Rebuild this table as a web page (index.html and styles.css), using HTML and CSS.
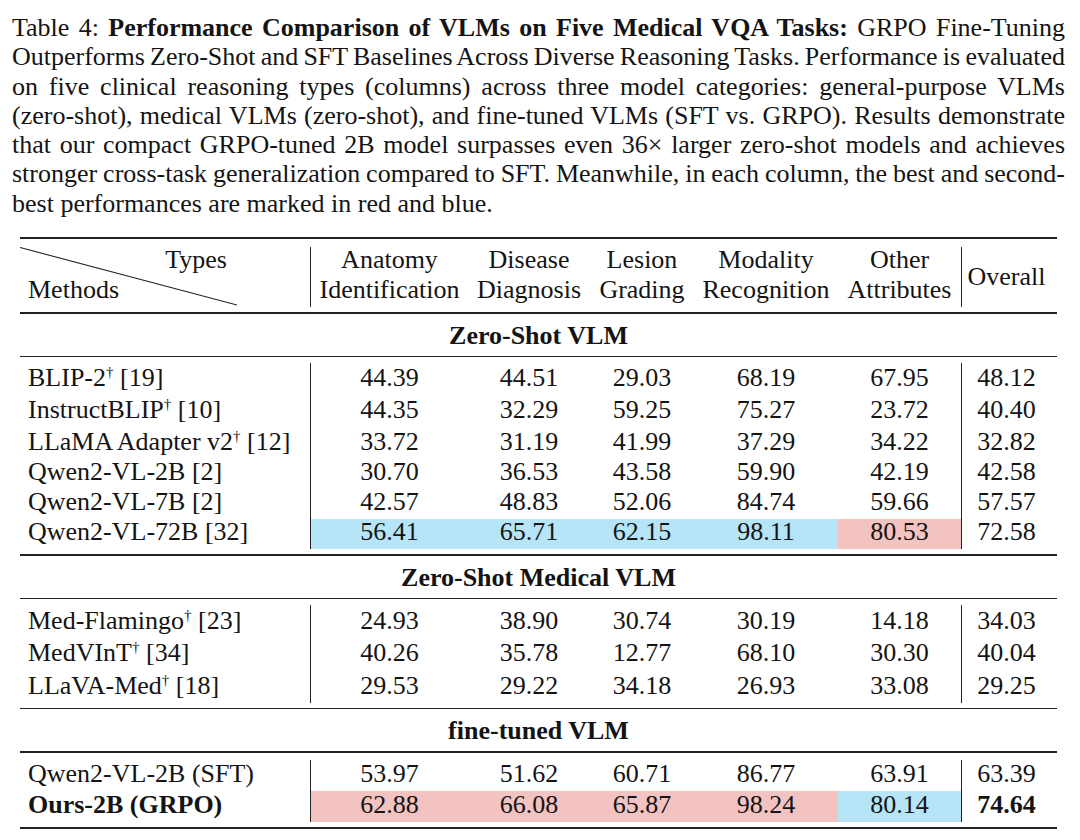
FILE: index.html
```html
<!DOCTYPE html>
<html lang="en">
<head>
<meta charset="utf-8">
<title>Table 4</title>
<link rel="stylesheet" href="styles.css">
</head>
<body>
<div class="page">
  <div class="caption">
    <span class="ln">Table 4: <b>Performance Comparison of VLMs on Five Medical VQA Tasks:</b> GRPO Fine-Tuning</span>
    <span class="ln">Outperforms Zero-Shot and SFT Baselines Across Diverse Reasoning Tasks. Performance is evaluated</span>
    <span class="ln">on five clinical reasoning types (columns) across three model categories: general-purpose VLMs</span>
    <span class="ln">(zero-shot), medical VLMs (zero-shot), and fine-tuned VLMs (SFT vs. GRPO). Results demonstrate</span>
    <span class="ln">that our compact GRPO-tuned 2B model surpasses even 36× larger zero-shot models and achieves</span>
    <span class="ln">stronger cross-task generalization compared to SFT. Meanwhile, in each column, the best and second-</span>
    <span class="ln last">best performances are marked in red and blue.</span>
  </div>

  <div class="tbl">
    <div class="rule thick"></div>
    <div class="head">
      <div class="diag">
        <svg class="diag-line" width="217" height="60" viewBox="0 0 217 60"><line x1="0" y1="0.5" x2="217" y2="58" stroke="#222" stroke-width="1.1"/></svg>
        <div class="types">Types</div>
        <div class="methods">Methods</div>
      </div>
      <div class="hc vl"><div class="hl">Anatomy</div><div class="hl">Identification</div></div>
      <div class="hc"><div class="hl">Disease</div><div class="hl">Diagnosis</div></div>
      <div class="hc"><div class="hl">Lesion</div><div class="hl">Grading</div></div>
      <div class="hc"><div class="hl">Modality</div><div class="hl">Recognition</div></div>
      <div class="hc"><div class="hl">Other</div><div class="hl">Attributes</div></div>
      <div class="hc vl hov">Overall</div>
    </div>
    <div class="rule"></div>

    <div class="gtitle">Zero-Shot VLM</div>
    <div class="rule"></div>
    <div class="group">
      <div class="row t32"><div class="m">BLIP-2<sup>†</sup> [19]</div><div class="vl">44.39</div><div>44.51</div><div>29.03</div><div>68.19</div><div>67.95</div><div class="vl ov">48.12</div></div>
      <div class="row t32"><div class="m">InstructBLIP<sup>†</sup> [10]</div><div class="vl">44.35</div><div>32.29</div><div>59.25</div><div>75.27</div><div>23.72</div><div class="vl ov">40.40</div></div>
      <div class="row t32"><div class="m">LLaMA Adapter v2<sup>†</sup> [12]</div><div class="vl">33.72</div><div>31.19</div><div>41.99</div><div>37.29</div><div>34.22</div><div class="vl ov">32.82</div></div>
      <div class="row"><div class="m">Qwen2-VL-2B [2]</div><div class="vl">30.70</div><div>36.53</div><div>43.58</div><div>59.90</div><div>42.19</div><div class="vl ov">42.58</div></div>
      <div class="row"><div class="m">Qwen2-VL-7B [2]</div><div class="vl">42.57</div><div>48.83</div><div>52.06</div><div>84.74</div><div>59.66</div><div class="vl ov">57.57</div></div>
      <div class="row"><div class="m">Qwen2-VL-72B [32]</div><div class="vl hb">56.41</div><div class="hb">65.71</div><div class="hb">62.15</div><div class="hb">98.11</div><div class="hr">80.53</div><div class="vl ov">72.58</div></div>
    </div>
    <div class="rule"></div>

    <div class="gtitle">Zero-Shot Medical VLM</div>
    <div class="rule"></div>
    <div class="group">
      <div class="row t325"><div class="m">Med-Flamingo<sup>†</sup> [23]</div><div class="vl">24.93</div><div>38.90</div><div>30.74</div><div>30.19</div><div>14.18</div><div class="vl ov">34.03</div></div>
      <div class="row t325"><div class="m">MedVInT<sup>†</sup> [34]</div><div class="vl">40.26</div><div>35.78</div><div>12.77</div><div>68.10</div><div>30.30</div><div class="vl ov">40.04</div></div>
      <div class="row t325"><div class="m">LLaVA-Med<sup>†</sup> [18]</div><div class="vl">29.53</div><div>29.22</div><div>34.18</div><div>26.93</div><div>33.08</div><div class="vl ov">29.25</div></div>
    </div>
    <div class="rule"></div>

    <div class="gtitle">fine-tuned VLM</div>
    <div class="rule"></div>
    <div class="group g-last">
      <div class="row t31"><div class="m">Qwen2-VL-2B (SFT)</div><div class="vl">53.97</div><div>51.62</div><div>60.71</div><div>86.77</div><div>63.91</div><div class="vl ov">63.39</div></div>
      <div class="row t31"><div class="m"><b>Ours-2B (GRPO)</b></div><div class="vl hr">62.88</div><div class="hr">66.08</div><div class="hr">65.87</div><div class="hr">98.24</div><div class="hb">80.14</div><div class="vl ov"><b>74.64</b></div></div>
    </div>
    <div class="rule thick"></div>
  </div>
</div>
</body>
</html>
```

FILE: styles.css
```css
* {
  box-sizing: border-box;
}

body {
  margin: 0;
  background: #ffffff;
  color: #141414;
  font-family: "Liberation Serif", "Times New Roman", Times, serif;
  font-size: 26px;
}

.page {
  padding-top: 13px;
}

/* ---------- caption ---------- */
.caption {
  margin-left: 12px;
  width: 1053px;
  line-height: 29.3px;
}

.ln {
  display: block;
  text-align: justify;
  text-align-last: justify;
  word-spacing: -3px;
}

.ln.last {
  text-align-last: left;
  word-spacing: 0;
}

/* ---------- table ---------- */
.tbl {
  margin: 19px 0 0 20px;
  width: 1037px;
}

.rule {
  height: 1.5px;
  background: #222222;
}

.rule.thick {
  height: 2px;
}

.head,
.row {
  display: grid;
  grid-template-columns: 290px 158px 122px 104px 144px 123px 96px;
}

.head {
  padding: 8px 0 5px;
}

.diag {
  position: relative;
  width: 217px;
  height: 60px;
}

.diag-line {
  position: absolute;
  left: 0;
  top: 0;
}

.types {
  line-height: 25px;
  padding: 0 10px 5px 0;
  text-align: right;
}

.methods {
  line-height: 25px;
  padding: 0 0 5px 8px;
}

.hl {
  line-height: 25px;
  padding-bottom: 5px;
  text-align: center;
  white-space: nowrap;
}

.hov {
  display: flex;
  align-items: center;
  justify-content: center;
  line-height: 30px;
  padding-right: 6px;
}

.vl {
  border-left: 1px solid #222222;
}

.gtitle {
  font-weight: bold;
  text-align: center;
  line-height: 30px;
  padding: 7px 0 5px;
}

.group {
  padding: 6px 0 5px;
}

.group.g-last {
  padding-top: 7px;
}

.row {
  height: 30px;
}

.row > div {
  line-height: 25px;
  text-align: center;
  white-space: nowrap;
}

.row.t32 {
  height: 32px;
}

.row.t32 > div {
  padding-top: 2px;
}

.row.t325 {
  height: 32.5px;
}

.row.t325 > div {
  padding-top: 2.5px;
}

.row.t31 {
  height: 31px;
}

.row.t31 > div {
  padding-top: 1px;
}

.row > .m {
  text-align: left;
  padding-left: 8px;
}

.row > .ov {
  padding-right: 6px;
}

.hb {
  background: #b6e5f8;
}

.hr {
  background: #f2c3c1;
}

sup {
  font-size: 15px;
  line-height: 0;
  vertical-align: 9px;
}
```
